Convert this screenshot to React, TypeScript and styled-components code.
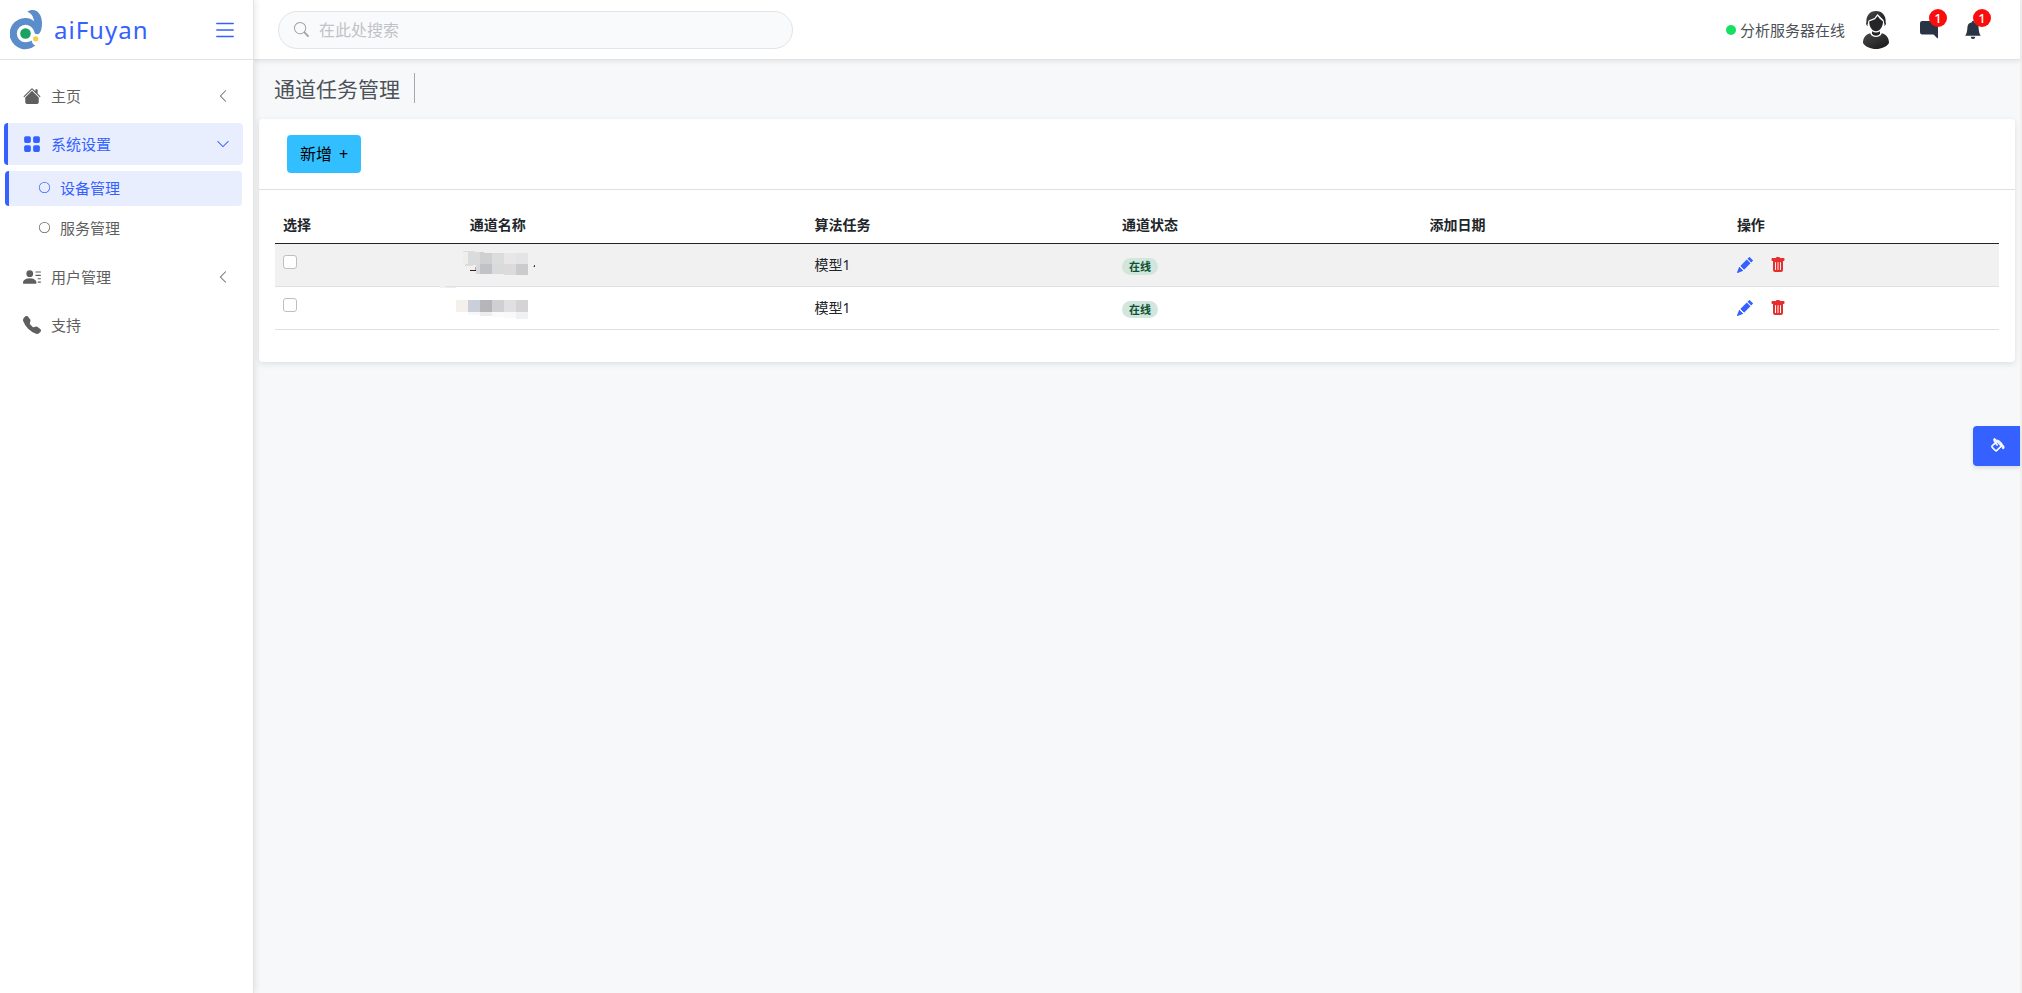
import React from "react";
import styled, { createGlobalStyle, css } from "styled-components";
import {
  BsBellFill,
  BsChatRightFill,
  BsChevronDown,
  BsChevronLeft,
  BsCircle,
  BsGridFill,
  BsHouseFill,
  BsList,
  BsPaintBucket,
  BsPencilFill,
  BsPersonLinesFill,
  BsSearch,
  BsTelephoneFill,
  BsTrashFill,
} from "react-icons/bs";

const blue = "#3461ff";

const GlobalStyle = createGlobalStyle`
  *, *::before, *::after { box-sizing: border-box; }
  body {
    margin: 0;
    background: #f7f8fa;
    color: #212529;
    font-family: "Noto Sans", "Noto Sans CJK SC", sans-serif;
    font-size: 14px;
    line-height: 20px;
  }
  button, input { font: inherit; }
  button { cursor: pointer; }
`;

const Shell = styled.div`
  display: grid;
  grid-template-columns: 254px minmax(0, 1fr);
  min-height: 100vh;
  border-right: 2px solid #f0f0f0;
`;

const Sidebar = styled.aside`
  position: relative;
  z-index: 2;
  background: #fff;
  border-right: 1px solid #e2e3e4;
  box-shadow: 2px 0 6px rgba(0, 0, 0, 0.08);
`;

const Brand = styled.div`
  display: flex;
  align-items: center;
  height: 60px;
  padding: 0 15px 0 10px;
  border-bottom: 1px solid #e2e3e4;
`;

const BrandName = styled.span`
  flex: 1;
  margin-left: 11px;
  color: ${blue};
  font-size: 24px;
  line-height: 32px;
  letter-spacing: 1px;
`;

const IconButton = styled.button<{ $color: string }>`
  position: relative;
  display: flex;
  padding: 0;
  border: 0;
  background: none;
  color: ${(p) => p.$color};
`;

const Nav = styled.nav`
  display: flex;
  flex-direction: column;
  gap: 6px;
  padding: 15px 10px 0 4px;
`;

const activeItem = css`
  border-left-color: ${blue};
  background: #e9eeff;
  color: ${blue};
`;

const NavItem = styled.a<{ $active?: boolean }>`
  display: flex;
  align-items: center;
  gap: 10px;
  height: 42px;
  padding: 0 12px 0 15px;
  border-left: 4px solid transparent;
  border-radius: 4px;
  color: #5f5f5f;
  font-size: 15px;
  text-decoration: none;
  ${(p) => p.$active && activeItem}
`;

const NavLabel = styled.span`
  flex: 1;
`;

const SubNav = styled.div`
  display: flex;
  flex-direction: column;
  gap: 5px;
  padding: 0 1px 4px;
`;

const SubItem = styled(NavItem)`
  height: 35px;
  padding: 0 0 2px 30px;
`;

const ChevronBox = styled.span`
  display: flex;
  justify-content: center;
  width: 16px;
`;

const Main = styled.div`
  display: flex;
  flex-direction: column;
`;

const Header = styled.header`
  display: flex;
  align-items: center;
  justify-content: space-between;
  height: 60px;
  padding: 0 38px 0 24px;
  background: #fff;
  border-bottom: 1px solid #e2e3e4;
  box-shadow: 0 2px 4px rgba(0, 0, 0, 0.07);
`;

const SearchBox = styled.label`
  display: flex;
  align-items: center;
  gap: 10px;
  flex: 0 1 515px;
  height: 38px;
  padding: 0 15px;
  border: 1px solid #e2e4e6;
  border-radius: 19px;
  background: #f9fafb;
  color: #a2a4a6;
`;

const SearchInput = styled.input`
  flex: 1;
  min-width: 0;
  padding: 0;
  border: 0;
  outline: 0;
  background: none;
  color: #4c5258;
  font-size: 16px;
  &::placeholder {
    color: #bfc3c6;
    opacity: 1;
  }
`;

const HeaderTools = styled.div`
  display: flex;
  align-items: center;
`;

const ServerStatus = styled.span`
  display: flex;
  align-items: center;
  gap: 4px;
  margin-right: 17px;
  color: #4c5258;
  font-size: 15px;
  &::before {
    content: "";
    width: 10px;
    height: 10px;
    border-radius: 50%;
    background: #17e060;
  }
`;

const Notices = styled.div`
  display: flex;
  align-items: center;
  gap: 26px;
  margin-left: 30px;
`;

const Count = styled.span`
  position: absolute;
  top: -12px;
  right: -9px;
  width: 18px;
  height: 18px;
  border-radius: 50%;
  background: #f90d0d;
  color: #fff;
  font-size: 13px;
  font-weight: 500;
  line-height: 18px;
  text-align: center;
`;

const Content = styled.main`
  padding: 13px 5px 24px;
`;

const TitleBar = styled.div`
  display: flex;
  align-items: center;
  height: 30px;
  margin: 0 0 16px 15px;
`;

const Title = styled.h1`
  height: 30px;
  margin: 0;
  padding-right: 14px;
  border-right: 1px solid #a6a8ac;
  color: #4c5258;
  font-size: 21px;
  font-weight: 400;
  line-height: 32px;
`;

const Card = styled.section`
  background: #fff;
  border-radius: 4px;
  box-shadow: 0 2px 6px rgba(0, 0, 0, 0.1);
`;

const CardHeader = styled.div`
  padding: 16px 28px;
  border-bottom: 1px solid #e0e0e0;
`;

const AddButton = styled.button`
  display: flex;
  align-items: center;
  gap: 7px;
  height: 38px;
  padding: 0 13px;
  border: 0;
  border-radius: 4px;
  background: #32bfff;
  color: #000;
  font-size: 16px;
`;

const CardBody = styled.div`
  padding: 16px 16px 32px;
`;

const Table = styled.table`
  width: 100%;
  table-layout: fixed;
  border-collapse: separate;
  border-spacing: 0;
`;

const Column = styled.col<{ $share: number }>`
  width: ${(p) => p.$share}px;
`;

const HeadCell = styled.th`
  height: 38px;
  padding: 0 8px;
  border-bottom: 1px solid #212529;
  font-weight: 700;
  text-align: left;
`;

const Cell = styled.td<{ $flush?: boolean }>`
  height: 43px;
  padding: ${(p) => (p.$flush ? "0" : "0 8px")};
  border-bottom: 1px solid #dee0e6;
`;

const Row = styled.tr`
  &:nth-child(odd) ${Cell} {
    background: #f1f1f1;
  }
`;

const Check = styled.input`
  display: block;
  appearance: none;
  width: 14px;
  height: 14px;
  margin: 0 0 6px;
  border: 1px solid #bfbfbf;
  border-radius: 3px;
  background: #fff;
  &:checked {
    background: ${blue};
  }
`;

const StatusPill = styled.span`
  display: block;
  width: 36px;
  height: 17px;
  margin-top: 2px;
  border-radius: 9px;
  background: #d1e7dd;
  color: #0f5132;
  font-size: 11px;
  font-weight: 700;
  line-height: 17px;
  text-align: center;
`;

const Actions = styled.div`
  display: flex;
  align-items: center;
  gap: 17px;
`;

const MaskDrawing = styled.svg`
  display: block;
  width: 100px;
  height: 42px;
  margin-left: -22px;
  overflow: visible;
`;

const ThemeButton = styled.button`
  position: fixed;
  top: calc(43% - 1px);
  right: 2px;
  display: flex;
  align-items: center;
  justify-content: center;
  width: 47px;
  height: 40px;
  padding: 0 0 0 3px;
  border: 0;
  border-radius: 4px 0 0 4px;
  background: ${blue};
  color: #fff;
  box-shadow: 0 2px 4px rgba(0, 0, 0, 0.12);
`;

const Logo = () => (
  <svg width="33" height="40" viewBox="0 0 33 40" aria-hidden="true">
    <path
      fill="#5a8dca"
      d="M17.3 1.8C19 .6 20.600 0 22.500 0 28.500 0 32 6 32 13c0 4-.6 8-2.500 10.200-1.200 1.300-3.200 1.200-4.700.3C24 18.500 20 14.800 15.500 14.800a8.700 8.700 0 0 0 0 17.400c2.300 0 4.300-.2 6.200-1.600.2 2.200 1.400 4.200 3.600 4.900A15.600 15.600 0 1 1 15.500 8C19 8 21.500 9.200 24 11.200 23.600 7 21.500 3.500 17.300 1.800Z"
    />
    <circle cx="15.500" cy="23.500" r="5.300" fill="#1aa260" />
    <circle cx="25.700" cy="28.800" r="2.600" fill="#f7cb45" />
  </svg>
);

const Avatar = () => (
  <svg width="28" height="40" viewBox="0 0 28 40" role="img" aria-label="avatar">
    <defs>
      <linearGradient id="suit" x1="0" y1="0" x2="1" y2="1">
        <stop offset="0" stopColor="#4a4a4c" />
        <stop offset="1" stopColor="#161617" />
      </linearGradient>
    </defs>
    <path
      fill="url(#suit)"
      d="M4.500 13C3.500 5.500 8 1 14 1s10.500 4.500 9.500 12l-.8 1.800L21.500 10 18 6.500 15.500 4 12.500 8 6.500 10.500l-1 4.300Z"
    />
    <path
      fill="#252527"
      d="M7.200 11.500 13 9.200l2.600-3.300L17.500 8.500l3.500 3c0 5-3 9.800-7 9.800s-6.800-4.800-6.800-9.800Z"
    />
    <path fill="#3a3a3c" d="m4 12.500 1 .3.800 3.200c-1.300-.3-2-2-1.800-3.500Zm20 0-1 .3-.8 3.200c1.300-.3 2-2 1.800-3.500Z" />
    <path fill="#252527" d="M10 21.200c2.500 1.600 5.500 1.600 8 0v2.600c-1.500 2.600-6.500 2.600-8 0Z" />
    <path
      fill="url(#suit)"
      d="M8.300 23.300C3.500 24.600 1 28 1 33c2 3.500 7.500 6 13 6s11-2.500 13-6c0-5-2.500-8.400-7.300-9.700-1 5-10.400 5-11.400 0Z"
    />
  </svg>
);

type Block = [x: number, y: number, width: number, height: number, fill: string];

const masks: Block[][] = [
  [
    [23, 7, 12, 1, "#dcdcdc"],
    [23, 8, 5, 12, "#efeeed"],
    [25, 20, 8, 2, "#dadcdf"],
    [28, 8, 12, 13, "#d9dbdd"],
    [40, 8, 4, 1, "#cfd0d2"],
    [40, 9, 12, 11, "#cfd0d2"],
    [52, 9, 12, 11, "#dcdcdc"],
    [64, 9, 12, 11, "#e7e7e8"],
    [76, 9, 12, 11, "#e4e4e4"],
    [36, 20, 4, 10, "#d5d9de"],
    [40, 20, 12, 10, "#c2c1c6"],
    [52, 20, 12, 10, "#d8dadc"],
    [64, 20, 12, 11, "#dddadc"],
    [76, 20, 12, 11, "#cacbcd"],
    [30, 26, 6, 1, "#25252d"],
    [35, 23, 1, 3, "#e0a060"],
    [93, 22, 1, 1, "#d9a266"],
    [94, 21, 1, 2, "#26457a"],
    [0, 42, 6, 2, "#f1f1f1"],
    [6, 43, 10, 1, "#ededed"],
  ],
  [
    [16, 13, 12, 12, "#f4f1ec"],
    [28, 13, 12, 12, "#cbcfd9"],
    [40, 13, 12, 12, "#b6b5ba"],
    [52, 13, 12, 12, "#d0d0d3"],
    [64, 13, 12, 12, "#e1dfe1"],
    [76, 13, 12, 12, "#d4d4d6"],
    [28, 25, 12, 3, "#f7f8f8"],
    [40, 25, 12, 4, "#ededee"],
    [52, 25, 12, 5, "#f9fafa"],
    [64, 25, 12, 6, "#f9f9f9"],
    [76, 25, 12, 7, "#f0f1f3"],
  ],
];

const MaskedName = ({ blocks }: { blocks: Block[] }) => (
  <MaskDrawing viewBox="0 0 100 42" shapeRendering="crispEdges" aria-hidden="true">
    {blocks.map(([x, y, width, height, fill], i) => (
      <rect key={i} x={x} y={y} width={width} height={height} fill={fill} />
    ))}
  </MaskDrawing>
);

const columns = [
  { label: "选择", share: 65 },
  { label: "通道名称", share: 120 },
  { label: "算法任务", share: 107 },
  { label: "通道状态", share: 107 },
  { label: "添加日期", share: 107 },
  { label: "操作", share: 94 },
];

export default function App() {
  return (
    <>
      <GlobalStyle />
      <Shell>
        <Sidebar>
          <Brand>
            <Logo />
            <BrandName>aiFuyan</BrandName>
            <IconButton $color={blue} aria-label="菜单">
              <BsList size={26} />
            </IconButton>
          </Brand>
          <Nav>
            <NavItem href="#home">
              <BsHouseFill size={18} />
              <NavLabel>主页</NavLabel>
              <ChevronBox>
                <BsChevronLeft size={14} />
              </ChevronBox>
            </NavItem>
            <NavItem href="#settings" $active>
              <BsGridFill size={18} />
              <NavLabel>系统设置</NavLabel>
              <ChevronBox>
                <BsChevronDown size={14} />
              </ChevronBox>
            </NavItem>
            <SubNav>
              <SubItem href="#devices" $active>
                <BsCircle size={11} />
                设备管理
              </SubItem>
              <SubItem href="#services">
                <BsCircle size={11} />
                服务管理
              </SubItem>
            </SubNav>
            <NavItem href="#users">
              <BsPersonLinesFill size={18} />
              <NavLabel>用户管理</NavLabel>
              <ChevronBox>
                <BsChevronLeft size={14} />
              </ChevronBox>
            </NavItem>
            <NavItem href="#support">
              <BsTelephoneFill size={18} />
              <NavLabel>支持</NavLabel>
            </NavItem>
          </Nav>
        </Sidebar>
        <Main>
          <Header>
            <SearchBox>
              <BsSearch size={15} />
              <SearchInput type="text" placeholder="在此处搜索" aria-label="搜索" />
            </SearchBox>
            <HeaderTools>
              <ServerStatus>分析服务器在线</ServerStatus>
              <Avatar />
              <Notices>
                <IconButton $color="#293445" aria-label="消息">
                  <BsChatRightFill size={18} />
                  <Count>1</Count>
                </IconButton>
                <IconButton $color="#293445" aria-label="通知">
                  <BsBellFill size={18} />
                  <Count>1</Count>
                </IconButton>
              </Notices>
            </HeaderTools>
          </Header>
          <Content>
            <TitleBar>
              <Title>通道任务管理</Title>
            </TitleBar>
            <Card>
              <CardHeader>
                <AddButton>
                  <span>新增</span>
                  <span>+</span>
                </AddButton>
              </CardHeader>
              <CardBody>
                <Table>
                  <colgroup>
                    {columns.map((c) => (
                      <Column key={c.label} $share={c.share} />
                    ))}
                  </colgroup>
                  <thead>
                    <tr>
                      {columns.map((c) => (
                        <HeadCell key={c.label} scope="col">
                          {c.label}
                        </HeadCell>
                      ))}
                    </tr>
                  </thead>
                  <tbody>
                    {masks.map((blocks, i) => (
                      <Row key={i}>
                        <Cell>
                          <Check type="checkbox" aria-label="选择" />
                        </Cell>
                        <Cell $flush>
                          <MaskedName blocks={blocks} />
                        </Cell>
                        <Cell>模型1</Cell>
                        <Cell>
                          <StatusPill>在线</StatusPill>
                        </Cell>
                        <Cell />
                        <Cell>
                          <Actions>
                            <IconButton $color={blue} aria-label="编辑">
                              <BsPencilFill size={16} />
                            </IconButton>
                            <IconButton $color="#e72e2e" aria-label="删除">
                              <BsTrashFill size={16} />
                            </IconButton>
                          </Actions>
                        </Cell>
                      </Row>
                    ))}
                  </tbody>
                </Table>
              </CardBody>
            </Card>
          </Content>
        </Main>
      </Shell>
      <ThemeButton aria-label="主题">
        <BsPaintBucket size={15} strokeWidth={1} />
      </ThemeButton>
    </>
  );
}
